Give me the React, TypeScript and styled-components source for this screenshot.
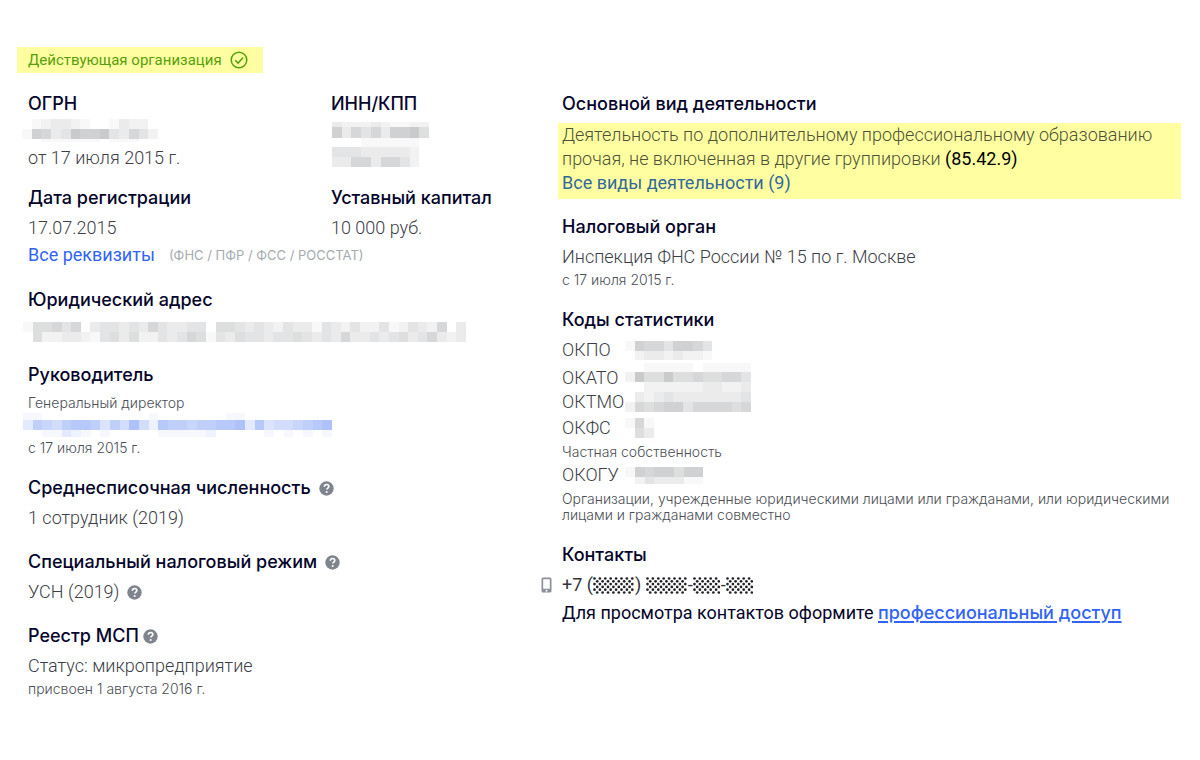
import React from 'react';
import styled, { createGlobalStyle } from 'styled-components';

const GlobalStyle = createGlobalStyle`
  *, *::before, *::after { box-sizing: border-box; }
  body {
    margin: 0;
    background: #fff;
    color: #3c4046;
    font-family: Roboto, "Noto Sans", sans-serif;
    font-size: 18px;
    line-height: 24px;
    font-weight: 300;
  }
  h2, p, dl, dt, dd { margin: 0; }
`;

const Page = styled.main`
  padding: 47px 19px 48px 17px;
`;

const Status = styled.p`
  display: inline-flex;
  align-items: center;
  gap: 8px;
  height: 26px;
  padding: 0 15px 0 11px;
  background: #ffffa1;
  color: #57a00c;
  font-size: 15px;
  font-weight: 400;
  vertical-align: top;
`;

const Columns = styled.div`
  display: grid;
  grid-template-columns: minmax(0, 534fr) minmax(0, 619fr);
  padding: 19px 0 0 11px;
`;

const Column = styled.div`
  display: flex;
  flex-direction: column;
  gap: 20px;
`;

const Requisites = styled.div`
  padding-bottom: 1px;
`;

const Pair = styled.div`
  display: grid;
  grid-template-columns: 303fr 231fr;
  row-gap: 16px;
`;

const Section = styled.section`
  min-width: 0;
`;

const Title = styled.h2<{ $gap?: number; $iconGap?: number }>`
  display: flex;
  align-items: center;
  gap: ${(p) => p.$iconGap ?? 8}px;
  margin-bottom: ${(p) => p.$gap ?? 6}px;
  color: #05052b;
  font-family: Inter, sans-serif;
  font-size: 18px;
  line-height: 24px;
  font-weight: 500;
`;

const Text = styled.p`
  display: flex;
  align-items: center;
  gap: 8px;
`;

const Small = styled.p`
  margin-top: 3px;
  color: #4c5056;
  font-family: Inter, sans-serif;
  font-size: 14px;
  line-height: 16px;
`;

const LinkRow = styled.p`
  display: flex;
  align-items: center;
  gap: 14px;
  margin-top: 3px;
`;

const Link = styled.a`
  color: #3164f4;
  font-weight: 400;
  text-decoration: none;
`;

const Note = styled.span`
  color: #a5abae;
  font-family: Inter, sans-serif;
  font-size: 13px;
  font-weight: 400;
`;

const Highlight = styled.div`
  margin: 0 0 -4px -4px;
  padding: 0 4px 4px;
  background: #ffffa1;
  color: #4d5236;
`;

const Code = styled.span`
  color: #000;
  font-weight: 400;
`;

const ActivityLink = styled(Link)`
  color: #33689c;
`;

const Codes = styled.dl`
  display: flex;
  flex-direction: column;
`;

const CodeRow = styled.div`
  display: grid;
  grid-template-columns: 63px 1fr;
  align-items: center;
  height: 26px;

  dd { display: flex; }
`;

const CodeNote = styled(Small)`
  &:not(:last-child) { margin-bottom: 2px; }
`;

const Phone = styled.p`
  display: flex;
  align-items: center;
  gap: 10px;
  margin: 0 0 4px -21px;
  color: #33363b;
  font-weight: 400;
`;

const PhoneNumber = styled.span`
  display: inline-flex;
  align-items: center;
  white-space: pre;
`;

const DotsSvg = styled.svg`
  margin: 0 1px 0 0;
`;

const Access = styled.p`
  color: #05052b;
  font-weight: 400;
`;

const AccessLink = styled.a`
  color: #3164f4;
  font-family: Inter, sans-serif;
  font-weight: 500;
  text-decoration: underline;
  text-decoration-thickness: 2px;
  text-underline-offset: 2px;
`;

const HelpButton = styled.button`
  display: inline-flex;
  flex: none;
  padding: 0;
  border: 0;
  background: none;
  cursor: pointer;
`;

const MosaicSvg = styled.svg<{ $top?: number; $left?: number; $bottom?: number }>`
  display: block;
  flex: none;
  margin: ${(p) => p.$top ?? 0}px 0 ${(p) => p.$bottom ?? 0}px ${(p) => p.$left ?? 0}px;
`;

type MosaicRow = [height: number, cells: string];

interface MosaicProps {
  width: number;
  rows: MosaicRow[];
  color?: string;
  strength?: number;
  top?: number;
  bottom?: number;
  left?: number;
}

/* Redacted value: each digit is the darkness of one cell, 0 is blank. */
function Mosaic({ width, rows, color = '#0c1218', strength = 0.028, top, bottom, left }: MosaicProps) {
  const columns = Math.max(...rows.map(([, cells]) => cells.length));
  const height = rows.reduce((sum, [h]) => sum + h, 0);
  const cell = width / columns;
  let y = 0;
  return (
    <MosaicSvg width={width} height={height} shapeRendering="crispEdges" role="img" aria-label="Скрыто" $top={top} $bottom={bottom} $left={left}>
      {rows.map(([h, cells], r) => {
        const rowY = y;
        y += h;
        return cells.split('').map((level, c) => (
          <rect key={`${r}-${c}`} x={c * cell} y={rowY} width={cell} height={h} fill={color} fillOpacity={Number(level) * strength} />
        ));
      })}
    </MosaicSvg>
  );
}

function Help({ label }: { label: string }) {
  return (
    <HelpButton type="button" aria-label={label}>
      <svg width="15" height="15" viewBox="0 0 15 15" aria-hidden="true">
        <circle cx="7.5" cy="7.5" r="7.2" fill="#7f848d" />
        <path d="M5.3 5.7c0-1.3.9-2.2 2.3-2.2 1.3 0 2.2.8 2.2 1.9 0 1.6-2 1.7-2 3.2" fill="none" stroke="#fff" strokeWidth="1.6" />
        <circle cx="7.7" cy="10.9" r="1" fill="#fff" />
      </svg>
    </HelpButton>
  );
}

function CheckIcon() {
  return (
    <svg width="18" height="18" viewBox="0 0 18 18" fill="none" stroke="#57a00c" strokeWidth="1.5" aria-hidden="true">
      <circle cx="9" cy="9" r="7.8" />
      <path d="M5.2 9.2l2.9 2.9 5-5.6" />
    </svg>
  );
}

function PhoneIcon() {
  return (
    <svg width="11" height="16" viewBox="0 0 11 16" aria-hidden="true">
      <path fillRule="evenodd" fill="#8b9099" d="M2 .5h7A1.5 1.5 0 0 1 10.5 2v12A1.5 1.5 0 0 1 9 15.5H2A1.5 1.5 0 0 1 .5 14V2A1.5 1.5 0 0 1 2 .5zM2.2 2.2v9.6h6.600V2.2zM5.5 12.8a1 1 0 1 0 0 2 1 1 0 0 0 0-2z" />
    </svg>
  );
}

/* Hidden digits of the phone number, drawn as a staggered field of dots. */
function Dots({ width }: { width: number }) {
  const dots: React.ReactNode[] = [];
  for (let r = 0; r < 6; r++) {
    for (let x = r % 2 ? 4.2 : 1.5; x < width - 0.5; x += 5.4) {
      dots.push(<circle key={`${r}-${x}`} cx={x} cy={1.5 + r * 2.8} r="1.35" />);
    }
  }
  return (
    <DotsSvg width={width} height="17" fill="#202226" role="img" aria-label="скрыто">
      {dots}
    </DotsSvg>
  );
}

export default function App() {
  return (
    <>
      <GlobalStyle />
      <Page>
        <Status>
          Действующая организация <CheckIcon />
        </Status>
        <Columns>
          <Column>
            <Requisites>
              <Pair>
                <Section>
                  <Title $gap={3}>ОГРН</Title>
                  <Mosaic width={136} left={-6} bottom={4} rows={[[10, '01233210013220'], [10, '17634877843642'], [3, '00111111011100']]} />
                  <Text>от 17 июля 2015 г.</Text>
                </Section>
                <Section>
                  <Title>ИНН/КПП</Title>
                  <Mosaic width={97} left={1} top={2} rows={[[5, '3222321122'], [11, '7364637785'], [9, '0001111110'], [10, '4443333320'], [10, '3366366420']]} />
                </Section>
                <Section>
                  <Title>Дата регистрации</Title>
                  <Text>17.07.2015</Text>
                </Section>
                <Section>
                  <Title>Уставный капитал</Title>
                  <Text>10 000 руб.</Text>
                </Section>
              </Pair>
              <LinkRow>
                <Link href="#details">Все реквизиты</Link>
                <Note>(ФНС / ПФР / ФСС / РОССТАТ)</Note>
              </LinkRow>
            </Requisites>

            <Section>
              <Title $gap={10}>Юридический адрес</Title>
              <Mosaic
                width={443}
                left={-5}
                bottom={1}
                rows={[
                  [10, '1556460344343643344055434324331432422412432603'],
                  [10, '0522332145352243465143544344543436334345346323'],
                ]}
              />
            </Section>

            <Section>
              <Title $gap={8}>Руководитель</Title>
              <Small>Генеральный директор</Small>
              <Mosaic
                width={309}
                top={2}
                bottom={3}
                left={-5}
                color="#3364f0"
                strength={0.044}
                rows={[
                  [7, '11000000000001000000011000000000'],
                  [10, '37657887475952877677889384556789'],
                  [7, '00113210100000111112000001010101'],
                ]}
              />
              <Small>с 17 июля 2015 г.</Small>
            </Section>

            <Section>
              <Title>
                Среднесписочная численность <Help label="Что такое среднесписочная численность" />
              </Title>
              <Text>1 сотрудник (2019)</Text>
            </Section>

            <Section>
              <Title>
                Специальный налоговый режим <Help label="Что такое специальный налоговый режим" />
              </Title>
              <Text>
                УСН (2019) <Help label="Что такое УСН" />
              </Text>
            </Section>

            <Section>
              <Title $iconGap={4}>
                Реестр МСП <Help label="Что такое реестр МСП" />
              </Title>
              <Text>Статус: микропредприятие</Text>
              <Small>присвоен 1 августа 2016 г.</Small>
            </Section>
          </Column>

          <Column>
            <Section>
              <Title $gap={7}>Основной вид деятельности</Title>
              <Highlight>
                <p>
                  Деятельность по дополнительному профессиональному образованию прочая, не включенная в другие группировки <Code>(85.42.9)</Code>
                </p>
                <p>
                  <ActivityLink href="#activities">Все виды деятельности (9)</ActivityLink>
                </p>
              </Highlight>
            </Section>

            <Section>
              <Title>Налоговый орган</Title>
              <Text>Инспекция ФНС России № 15 по г. Москве</Text>
              <Small>с 17 июля 2015 г.</Small>
            </Section>

            <Section>
              <Title $gap={5}>Коды статистики</Title>
              <Codes>
                <CodeRow>
                  <dt>ОКПО</dt>
                  <dd><Mosaic width={126} rows={[[10, '1766477640000'], [9, '0233232210000']]} /></dd>
                </CodeRow>
                <CodeRow>
                  <dt>ОКАТО</dt>
                  <dd><Mosaic width={126} rows={[[9, '0011111011111'], [10, '2855855655664'], [10, '0022222233223']]} /></dd>
                </CodeRow>
                <CodeRow>
                  <dt>ОКТМО</dt>
                  <dd><Mosaic width={126} rows={[[10, '0323433333334'], [10, '2656774666656']]} /></dd>
                </CodeRow>
                <CodeRow>
                  <dt>ОКФС</dt>
                  <dd><Mosaic width={29} rows={[[10, '161'], [10, '053']]} /></dd>
                </CodeRow>
                <CodeNote as="dd">Частная собственность</CodeNote>
                <CodeRow>
                  <dt>ОКОГУ</dt>
                  <dd><Mosaic width={78} rows={[[10, '17677577'], [7, '02433311']]} /></dd>
                </CodeRow>
                <CodeNote as="dd">
                  Организации, учрежденные юридическими лицами или гражданами, или юридическими лицами и гражданами совместно
                </CodeNote>
              </Codes>
            </Section>

            <Section>
              <Title>Контакты</Title>
              <Phone>
                <PhoneIcon />
                <PhoneNumber>
                  +7 (<Dots width={41} />) <Dots width={41} />-<Dots width={27} />-<Dots width={27} />
                </PhoneNumber>
              </Phone>
              <Access>
                Для просмотра контактов оформите <AccessLink href="#access">профессиональный доступ</AccessLink>
              </Access>
            </Section>
          </Column>
        </Columns>
      </Page>
    </>
  );
}
